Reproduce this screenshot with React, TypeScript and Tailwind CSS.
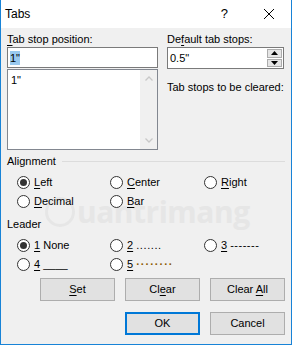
import React from 'react';

const font = { fontFamily: '"Liberation Sans", Arial, sans-serif' };

function U({ children }: { children: React.ReactNode }) {
  return <span className="underline underline-offset-2 decoration-1">{children}</span>;
}

function Radio({ checked, children, className = '' }: { checked?: boolean; children: React.ReactNode; className?: string }) {
  return (
    <div className={`flex items-center h-[19px] ${className}`}>
      <span className="w-[13px] h-[13px] rounded-full border border-[#333] bg-white flex items-center justify-center shrink-0">
        {checked && <span className="w-[7px] h-[7px] rounded-full bg-[#333]" />}
      </span>
      <span className="ml-[4px] text-[11px] text-black whitespace-pre">{children}</span>
    </div>
  );
}

function Btn({ children, primary }: { children: React.ReactNode; primary?: boolean }) {
  return (
    <div
      className={`w-[75px] h-[23px] flex items-center justify-center text-[11px] text-black bg-[#e1e1e1] ${
        primary ? 'border-2 border-[#0078d7]' : 'border border-[#adadad]'
      }`}
    >
      <span className="whitespace-pre">{children}</span>
    </div>
  );
}

export default function App() {
  return (
    <div style={font} className="relative w-[292px] h-[345px] border border-[#1883d7] border-t-0 bg-[#f0f0f0] overflow-hidden">
      {/* Watermark, behind the content */}
      <div className="absolute left-[44px] top-[197px] flex items-center pointer-events-none select-none">
        <span className="w-[30px] h-[30px] rounded-full border-[3px] border-[#e6e6e6]" />
        <span className="ml-[2px] text-[30px] leading-none text-[#e6e6e6] font-bold tracking-[-0.5px]" style={{ fontFamily: '"Open Sans", sans-serif' }}>
          uantrimang
        </span>
      </div>

      <div className="relative flex flex-col h-full">
        {/* Title bar */}
        <div className="h-[28px] bg-white flex items-center pl-[4px] shrink-0">
          <span className="text-[12px] text-black">Tabs</span>
          <span className="ml-auto text-[13px] text-black mr-[36px]">?</span>
          <svg width="10" height="10" viewBox="0 0 10 10" className="mr-[17px]">
            <path d="M0 0 L10 10 M10 0 L0 10" stroke="#000" strokeWidth="1" />
          </svg>
        </div>

        {/* Top fields */}
        <div className="flex pl-[6px] pt-[4px]">
          <div className="w-[151px] flex flex-col">
            <div className="h-[15px] text-[11px] text-black leading-[15px]">
              <U>T</U>ab stop position:
            </div>
            <div className="h-[21px] bg-white border border-[#7a7a7a] flex items-center px-[2px]">
              <span className="bg-[#99c9ef] text-[11px] leading-[14px] text-black">1"</span>
            </div>
            <div className="mt-[1px] h-[81px] bg-white border border-[#828790] flex">
              <div className="flex-1 text-[11px] text-black px-[3px] pt-[2px]">1"</div>
              <div className="w-[17px] bg-[#f0f0f0] flex flex-col items-center justify-between py-[6px]">
                <svg width="8" height="5" viewBox="0 0 8 5">
                  <path d="M0.5 4.5 L4 1 L7.5 4.5" stroke="#c8c8c8" strokeWidth="1.3" fill="none" />
                </svg>
                <svg width="8" height="5" viewBox="0 0 8 5">
                  <path d="M0.5 0.5 L4 4 L7.5 0.5" stroke="#c8c8c8" strokeWidth="1.3" fill="none" />
                </svg>
              </div>
            </div>
          </div>
          <div className="ml-[9px] w-[117px] flex flex-col">
            <div className="h-[15px] text-[11px] text-black leading-[15px] whitespace-nowrap">
              De<U>f</U>ault tab stops:
            </div>
            <div className="h-[22px] bg-white border border-[#7a7a7a] flex">
              <div className="flex-1 text-[11px] text-black flex items-center px-[2px]">0.5"</div>
              <div className="w-[15px] my-[1px] mr-[1px] flex flex-col gap-[1px]">
                <div className="flex-1 bg-[#e5e5e5] border border-[#acacac] flex items-center justify-center">
                  <svg width="7" height="4" viewBox="0 0 7 4"><path d="M0 4 L3.5 0 L7 4 Z" fill="#000" /></svg>
                </div>
                <div className="flex-1 bg-[#e5e5e5] border border-[#acacac] flex items-center justify-center">
                  <svg width="7" height="4" viewBox="0 0 7 4"><path d="M0 0 L3.5 4 L7 0 Z" fill="#000" /></svg>
                </div>
              </div>
            </div>
            <div className="mt-[10px] text-[11px] text-black whitespace-nowrap">Tab stops to be cleared:</div>
          </div>
        </div>

        {/* Alignment */}
        <div className="flex items-center pl-[6px] pr-[6px] mt-[4px] h-[15px]">
          <span className="text-[11px] text-black">Alignment</span>
          <div className="flex-1 h-px bg-[#dcdcdc] ml-[6px]" />
        </div>
        <div className="grid grid-cols-[93px_94px_1fr] pl-[16px] mt-[4px]">
          <Radio checked><U>L</U>eft</Radio>
          <Radio><U>C</U>enter</Radio>
          <Radio><U>R</U>ight</Radio>
          <Radio><U>D</U>ecimal</Radio>
          <Radio><U>B</U>ar</Radio>
        </div>

        {/* Leader */}
        <div className="pl-[6px] mt-[5px] h-[15px] text-[11px] text-black">Leader</div>
        <div className="grid grid-cols-[93px_94px_1fr] pl-[16px] mt-[5px]">
          <Radio checked><U>1</U> None</Radio>
          <Radio><U>2</U> <span className="tracking-[0.6px] text-black">.......</span></Radio>
          <Radio><U>3</U> <span className="tracking-[0.5px]">-------</span></Radio>
          <Radio><U>4</U> ____</Radio>
          <Radio><U>5</U> <span className="text-[#8a5a00] tracking-[1px] font-bold">········</span></Radio>
        </div>

        {/* Buttons */}
        <div className="flex justify-end gap-[10px] pr-[6px] mt-[4px]">
          <Btn><U>S</U>et</Btn>
          <Btn>Cl<U>e</U>ar</Btn>
          <Btn>Clear <U>A</U>ll</Btn>
        </div>
        <div className="flex justify-end gap-[10px] pr-[6px] mt-[11px]">
          <Btn primary>OK</Btn>
          <Btn>Cancel</Btn>
        </div>
      </div>
    </div>
  );
}
